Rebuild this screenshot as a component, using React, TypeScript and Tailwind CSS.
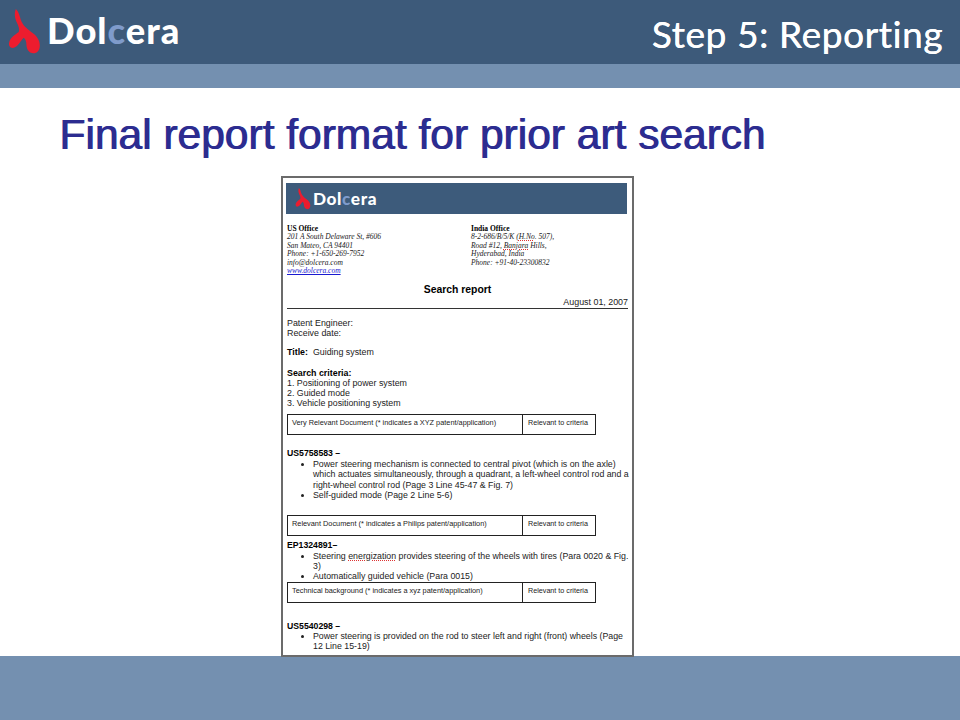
const Logo = ({ small }: { small?: boolean }) => (
  <div className={small ? 'flex items-center gap-[2px]' : 'flex items-center gap-[6px]'}>
    <svg
      viewBox="0 0 34 48"
      className={small ? 'w-[16px] h-[22px]' : 'w-[33px] h-[46px]'}
      aria-hidden="true"
    >
      <path
        d="M8 0 C11 3 12 7 13 11 C15 17 19 20 24 24 C29 27 33 32 33 38 C33 44 29 47 25 46 C21 45 19 41 19 37 C19 34 18 31 16 30 C13 33 11 38 7 40 C3 42 0 39 1 35 C2 30 7 27 11 24 C12 21 11 18 9 14 C7 10 6 5 8 0 Z"
        fill="#ed1c2e"
      />
    </svg>
    <span
      className={
        small
          ? 'font-["Lato",sans-serif] font-black text-[17.2px] leading-none tracking-[0.6px] text-white'
          : 'font-["Lato",sans-serif] font-black text-[36.3px] leading-none tracking-[1px] text-white -mt-[4px]'
      }
    >
      Dol<span className="text-[#7f9bcb]">c</span>era
    </span>
  </div>
)

const Legend = ({ label }: { label: string }) => (
  <div className="flex w-[309px] h-[21px] border border-[#222]">
    <div className="w-[235px] border-r border-[#222] pl-[4px] pt-[2px] text-[7.35px] leading-[12px] whitespace-nowrap">
      {label}
    </div>
    <div className="flex-1 pl-[5px] pt-[2px] text-[7.2px] leading-[12px] whitespace-nowrap">Relevant to criteria</div>
  </div>
)

const Bullets = ({ items }: { items: React.ReactNode[] }) => (
  <ul className="list-disc w-[343px] pl-[26px] text-[8.8px] leading-[10.3px]">
    {items.map((item, i) => (
      <li key={i}>{item}</li>
    ))}
  </ul>
)

const Squiggle = ({ children }: { children: React.ReactNode }) => (
  <span className="underline decoration-dotted decoration-[#d33] underline-offset-[1px]">{children}</span>
)

const ReportPage = () => (
  <div className="relative z-30 ml-[281px] mt-[19px] w-[353px] h-[481px] overflow-hidden border-2 border-[#6b6b6b] bg-white px-[4px] pt-[5px] font-['Liberation_Sans',sans-serif] text-[#222]">
    <div className="flex items-center -ml-[1px] h-[31px] w-[341px] bg-[#3d5b7b] pl-[9px]">
      <Logo small />
    </div>

    <div className="flex mt-[11px] font-['Liberation_Serif',serif] text-[7.5px] leading-[8.4px] italic">
      <div className="w-[184px]">
        <div className="font-bold not-italic text-black">US Office</div>
        <div>201 A South Delaware St, #606</div>
        <div>San Mateo, CA 94401</div>
        <div>Phone: +1-650-269-7952</div>
        <div>info@dolcera.com</div>
        <div className="text-[#1a1ad0] underline">www.dolcera.com</div>
      </div>
      <div>
        <div className="font-bold not-italic text-black">India Office</div>
        <div>8-2-686/B/5/K (<Squiggle>H.No</Squiggle>. 507),</div>
        <div>Road #12, <Squiggle>Banjara</Squiggle> Hills,</div>
        <div>Hyderabad, India</div>
        <div>Phone: +91-40-23300832</div>
      </div>
    </div>

    <div className="mt-[9px] text-center text-[10.4px] leading-[12px] font-bold text-black">Search report</div>
    <div className="w-[341px] border-b border-[#333] text-right text-[8.9px] leading-[12px]">August 01, 2007</div>

    <div className="mt-[9px] text-[8.85px] leading-[10px]">
      <div>Patent Engineer:</div>
      <div>Receive date:</div>
      <div className="mt-[9px]">
        <span className="font-bold text-black">Title:</span>&nbsp; Guiding system
      </div>
      <div className="mt-[11px] font-bold text-black">Search criteria:</div>
      <div>1. Positioning of power system</div>
      <div>2. Guided mode</div>
      <div>3. Vehicle positioning system</div>
    </div>

    <div className="mt-[6px]">
      <Legend label="Very Relevant Document (* indicates a XYZ patent/application)" />
    </div>

    <div className="mt-[13px] text-[8.7px] leading-[10.5px] font-bold text-black">US5758583 –</div>
    <Bullets
      items={[
        'Power steering mechanism is connected to central pivot (which is on the axle) which actuates simultaneously, through a quadrant, a left-wheel control rod and a right-wheel control rod (Page 3 Line 45-47 & Fig. 7)',
        'Self-guided mode (Page 2 Line 5-6)',
      ]}
    />

    <div className="mt-[15px]">
      <Legend label="Relevant Document (* indicates a Philips patent/application)" />
    </div>

    <div className="mt-[4px] text-[8.7px] leading-[10.5px] font-bold text-black">EP1324891–</div>
    <Bullets
      items={[
        <>
          Steering <Squiggle>energization</Squiggle> provides steering of the wheels with tires (Para 0020 & Fig.
          <br />
          3)
        </>,
        'Automatically guided vehicle (Para 0015)',
      ]}
    />

    <Legend label="Technical background (* indicates a xyz patent/application)" />

    <div className="mt-[18px] text-[8.7px] leading-[10.5px] font-bold text-black">US5540298 –</div>
    <Bullets
      items={['Power steering is provided on the rod to steer left and right (front) wheels (Page 12 Line 15-19)']}
    />
  </div>
)

const App = () => {
  return (
    <div className="w-[960px] h-[720px] overflow-hidden bg-white flex flex-col">
      <header className="flex items-center justify-between h-[64px] shrink-0 bg-[#3d5a7a] pl-[8px] pr-[17px]">
        <Logo />
        <h1 className="mt-[3px] font-['Lato',sans-serif] text-[37px] leading-none text-white tracking-[0.6px] [text-shadow:0.4px_0_0_#fff]">
          Step 5: Reporting
        </h1>
      </header>
      <div className="h-[24px] shrink-0 bg-[#7490b0]" />

      <main className="flex-1 min-h-0">
        <h2 className="mt-[24px] pl-[59px] font-['Liberation_Sans',sans-serif] text-[42.5px] leading-[45px] text-[#2c2c90] [text-shadow:1px_0_0_#2c2c90]">
          Final report format for prior art search
        </h2>
        <ReportPage />
      </main>

      <footer className="h-[64px] shrink-0 bg-[#7490b0]" />
    </div>
  )
}

export default App
